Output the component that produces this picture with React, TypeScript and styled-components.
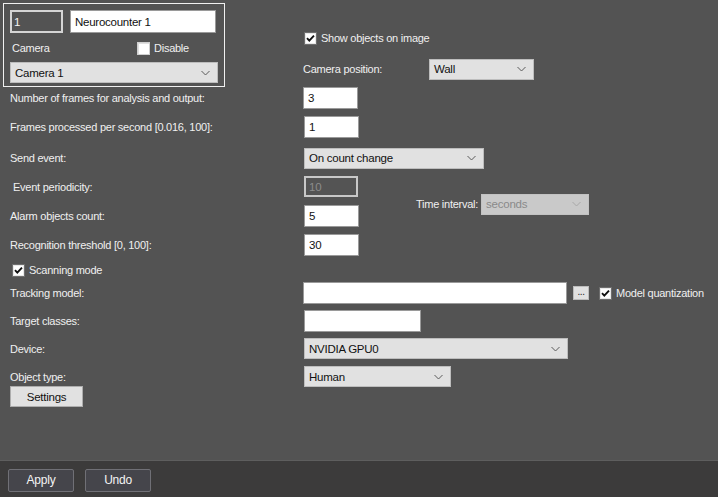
import React from "react";
import styled, { createGlobalStyle } from "styled-components";

const Global = createGlobalStyle`
  html, body { margin: 0; padding: 0; background: #535353; }
  body { font-family: "Liberation Sans", Arial, sans-serif; font-size: 11px; letter-spacing: -0.25px; }
  * { box-sizing: border-box; }
`;

const Page = styled.div`
  width: 718px;
  height: 497px;
  display: flex;
  flex-direction: column;
  background: #535353;
  color: #f2f2f2;
  overflow: hidden;
`;

const Main = styled.div`
  flex: 1;
  display: flex;
  flex-direction: column;
  padding: 0 0 0 10px;
`;

const Top = styled.div`
  display: flex;
  margin-left: -7px;
  margin-top: 3px;
  height: 84px;
`;

const TopBox = styled.div`
  width: 222px;
  height: 84px;
  border: 1px solid #f0f0f0;
  padding: 6px 6px 0 6px;
  display: flex;
  flex-direction: column;
`;

const BoxRow = styled.div<{ $h: number; $mt?: number }>`
  display: flex;
  align-items: center;
  height: ${(p) => p.$h}px;
  margin-top: ${(p) => p.$mt ?? 0}px;
`;

const TopRight = styled.div`
  display: flex;
  flex-direction: column;
  margin-left: 78px;
  padding-top: 28px;
`;

const Field = styled.div<{ $w: number; $h?: number; $ml?: number; $kind?: "white" | "dark" | "disabled" }>`
  width: ${(p) => p.$w}px;
  height: ${(p) => p.$h ?? 22}px;
  margin-left: ${(p) => p.$ml ?? 0}px;
  flex-shrink: 0;
  display: flex;
  align-items: center;
  padding-left: 3px;
  font-size: 11.5px;
  ${(p) =>
    p.$kind === "dark"
      ? `background: #535353; border: 2px solid #d4d4d4; color: #f4f4f4; padding-left: 2px;`
      : p.$kind === "disabled"
      ? `background: #545454; border: 2px solid #c8c8c8; color: #8c8c8c; padding-left: 3px;`
      : `background: #ffffff; border: 1px solid #9a9a9a; color: #111; padding-left: 4px;`}
`;

const SelectBox = styled.div<{ $w: number; $ml?: number; $disabled?: boolean }>`
  width: ${(p) => p.$w}px;
  height: 21px;
  margin-left: ${(p) => p.$ml ?? 0}px;
  flex-shrink: 0;
  display: flex;
  align-items: center;
  justify-content: space-between;
  padding: 0 7px 0 4px;
  font-size: 11.5px;
  background: ${(p) => (p.$disabled ? "#c9c9c9" : "#e1e1e1")};
  border: 1px solid ${(p) => (p.$disabled ? "#c2c2c2" : "#bdbdbd")};
  color: ${(p) => (p.$disabled ? "#8a8a8a" : "#111")};
`;

const Chevron = ({ color = "#5a5a5a" }: { color?: string }) => (
  <svg width="9" height="6" viewBox="0 0 9 6">
    <path d="M0.5 1 L4.5 5 L8.5 1" fill="none" stroke={color} strokeWidth="1" />
  </svg>
);

const Select = ({ w, ml, value, disabled }: { w: number; ml?: number; value: string; disabled?: boolean }) => (
  <SelectBox $w={w} $ml={ml} $disabled={disabled}>
    <span>{value}</span>
    <Chevron color={disabled ? "#a8a8a8" : "#5a5a5a"} />
  </SelectBox>
);

const Row = styled.div<{ $h: number; $mt: number }>`
  display: flex;
  align-items: center;
  height: ${(p) => p.$h}px;
  margin-top: ${(p) => p.$mt}px;
`;

const Label = styled.span<{ $w?: number; $pl?: number }>`
  width: ${(p) => (p.$w ? `${p.$w}px` : "auto")};
  padding-left: ${(p) => p.$pl ?? 0}px;
  flex-shrink: 0;
  white-space: nowrap;
  color: #f0f0f0;
  font-size: 11px;
`;

const Group = styled.div`
  display: flex;
  margin-top: 8px;
`;

const GroupCol = styled.div`
  display: flex;
  flex-direction: column;
`;

const TimeInterval = styled.div`
  display: flex;
  align-items: center;
  margin-top: 18px;
  margin-left: 57px;
  height: 20px;
  gap: 3px;
`;

const CheckWrap = styled.span<{ $ml?: number }>`
  display: flex;
  align-items: center;
  margin-left: ${(p) => p.$ml ?? 0}px;
  gap: 4px;
`;

const Box = styled.span<{ $checked?: boolean }>`
  width: 13px;
  height: 13px;
  flex-shrink: 0;
  background: #ffffff;
  border: 1px solid ${(p) => (p.$checked ? "#6e6e6e" : "#d0d0d0")};
  box-shadow: ${(p) => (p.$checked ? "inset 0 0 0 1px #e8e8e8" : "inset 1px 1px 0 #e0e0e0")};
  display: flex;
  align-items: center;
  justify-content: center;
`;

const Check = ({ checked, label, ml }: { checked?: boolean; label: string; ml?: number }) => (
  <CheckWrap $ml={ml}>
    <Box $checked={checked}>
      {checked && (
        <svg width="9" height="9" viewBox="0 0 9 9">
          <path d="M1 4.2 L3.3 6.6 L8 1.6" fill="none" stroke="#111" strokeWidth="1.9" />
        </svg>
      )}
    </Box>
    <Label>{label}</Label>
  </CheckWrap>
);

const Dots = styled.div`
  width: 16px;
  height: 14px;
  margin-left: 6px;
  background: #e1e1e1;
  border: 1px solid #bcbcbc;
  color: #222;
  font-size: 10px;
  line-height: 14px;
  text-align: center;
  letter-spacing: -0.5px;
  display: flex;
  align-items: flex-end;
  justify-content: center;
`;

const SettingsButton = styled.div`
  width: 73px;
  height: 21px;
  background: #e1e1e1;
  border: 1px solid #adadad;
  color: #111;
  font-size: 11.5px;
  display: flex;
  align-items: center;
  justify-content: center;
`;

const Footer = styled.div`
  height: 37px;
  background: #3c3b3b;
  border-top: 1px solid #5e5e5e;
  display: flex;
  align-items: center;
  padding: 0 0 0 8px;
  gap: 11px;
`;

const FootButton = styled.div`
  width: 66px;
  height: 23px;
  background: #45454b;
  border: 1px solid #707076;
  border-radius: 2px;
  color: #f4f4f4;
  font-size: 12px;
  display: flex;
  align-items: center;
  justify-content: center;
  margin-top: 2px;
`;

const LW = 293;

export default function App() {
  return (
    <Page>
      <Global />
      <Main>
        <Top>
          <TopBox>
            <BoxRow $h={23}>
              <Field $kind="dark" $w={53} $h={23}>1</Field>
              <Field $w={146} $h={23} $ml={7}>Neurocounter 1</Field>
            </BoxRow>
            <BoxRow $h={14} $mt={8}>
              <Label $w={125} $pl={2}>Camera</Label>
              <Check label="Disable" ml={2} />
            </BoxRow>
            <BoxRow $h={21} $mt={7}>
              <Select w={208} value="Camera 1" />
            </BoxRow>
          </TopBox>
          <TopRight>
            <BoxRow $h={14}>
              <Check checked label="Show objects on image" ml={1} />
            </BoxRow>
            <BoxRow $h={20} $mt={14}>
              <Label $w={126}>Camera position:</Label>
              <Select w={105} value="Wall" />
            </BoxRow>
          </TopRight>
        </Top>

        <Row $h={22} $mt={0}>
          <Label $w={LW}>Number of frames for analysis and output:</Label>
          <Field $w={55}>3</Field>
        </Row>
        <Row $h={22} $mt={7}>
          <Label $w={LW}>Frames processed per second [0.016, 100]:</Label>
          <Field $w={55} $ml={1}>1</Field>
        </Row>
        <Row $h={20} $mt={10}>
          <Label $w={LW}>Send event:</Label>
          <Select w={180} ml={1} value="On count change" />
        </Row>
        <Group>
          <GroupCol>
            <Row $h={21} $mt={0}>
              <Label $w={LW} $pl={3}>Event periodicity:</Label>
              <Field $kind="disabled" $w={54} $h={21} $ml={1}>10</Field>
            </Row>
            <Row $h={22} $mt={8}>
              <Label $w={LW}>Alarm objects count:</Label>
              <Field $w={55} $ml={1}>5</Field>
            </Row>
          </GroupCol>
          <TimeInterval>
            <Label>Time interval:</Label>
            <Select w={108} value="seconds" disabled />
          </TimeInterval>
        </Group>
        <Row $h={22} $mt={7}>
          <Label $w={LW}>Recognition threshold [0, 100]:</Label>
          <Field $w={55} $ml={1}>30</Field>
        </Row>
        <Row $h={14} $mt={7}>
          <Check checked label="Scanning mode" ml={2} />
        </Row>
        <Row $h={22} $mt={5}>
          <Label $w={LW}>Tracking model:</Label>
          <Field $w={264} />
          <Dots>...</Dots>
          <Check checked label="Model quantization" ml={10} />
        </Row>
        <Row $h={22} $mt={6}>
          <Label $w={LW}>Target classes:</Label>
          <Field $w={117} $ml={1} />
        </Row>
        <Row $h={21} $mt={6}>
          <Label $w={LW}>Device:</Label>
          <Select w={264} ml={1} value="NVIDIA GPU0" />
        </Row>
        <Row $h={21} $mt={7}>
          <Label $w={LW}>Object type:</Label>
          <Select w={147} ml={1} value="Human" />
        </Row>
        <Row $h={21} $mt={-1}>
          <SettingsButton>Settings</SettingsButton>
        </Row>
      </Main>
      <Footer>
        <FootButton>Apply</FootButton>
        <FootButton>Undo</FootButton>
      </Footer>
    </Page>
  );
}
